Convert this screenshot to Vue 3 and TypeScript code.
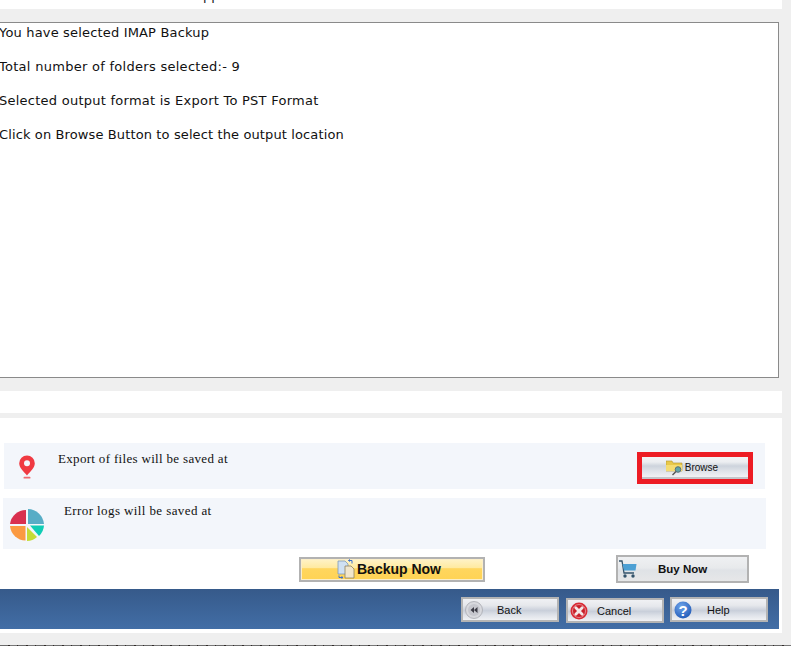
<script setup lang="ts">
const lines: string[] = [
  'You have selected IMAP Backup',
  'Total number of folders selected:- 9',
  'Selected output format is Export To PST Format',
  'Click on Browse Button to select the output location',
]
</script>

<template>
  <div class="page">
    <div class="top"><span class="tail">pp</span></div>
    <div class="box-wrap">
      <div class="box">
        <p v-for="l in lines" :key="l" class="line">{{ l }}</p>
      </div>
    </div>
    <div class="strip"></div>
    <div class="panel">
      <div class="row row-a">
        <svg class="pin" width="16" height="24" viewBox="0 0 16 24">
          <path d="M8 .5A7.800 7.800 0 0 0 .2 8.300C.2 13 5 17 8 20.500c3-3.500 7.800-7.500 7.800-12.200A7.800 7.800 0 0 0 8 .5z" fill="#f03a42"/>
          <circle cx="8" cy="8.300" r="3" fill="#f3f6fb"/>
          <rect x="4.500" y="21.800" width="7" height="1.800" rx=".9" fill="#ee6a70"/>
        </svg>
        <span class="label label-a">Export of files will be saved at</span>
        <div class="red">
          <button class="btn browse">
            <svg width="17" height="16" viewBox="0 0 17 16">
              <path d="M0 1h6l1 2h9v8H0z" fill="#e8c84a" stroke="#b4962a" stroke-width=".6"/>
              <path d="M0 5h16v6H0z" fill="#f4dc72"/>
              <circle cx="12" cy="9.500" r="2.800" fill="#5fa4a8" stroke="#56707a"/>
              <path d="M10 11.500 6.500 15" stroke="#555" stroke-width="1.400"/>
            </svg>
            <span>Browse</span>
          </button>
        </div>
      </div>
      <div class="row row-b">
        <svg class="chart" width="36" height="34" viewBox="0 0 36 34">
          <path d="M17 16V2a16 16 0 0 0-16 14z" fill="#d9304f"/>
          <path d="M19 1a16.500 16.500 0 0 1 16 15H19z" fill="#57adc6"/>
          <path d="M35 17.500a16 16 0 0 1-5 10.500l-9-10.500z" fill="#0fcdb5"/>
          <path d="M28 29a16 16 0 0 1-10 4V19z" fill="#c4dc36"/>
          <path d="M16.500 32.500A16 16 0 0 1 1 18h15.500z" fill="#fb9a41"/>
        </svg>
        <span class="label label-b">Error logs will be saved at</span>
      </div>
      <div class="cta">
        <button class="backup">
          <svg width="20" height="20" viewBox="0 0 20 20">
            <path d="M1 2h7l3 3v10H1z" fill="#cfe0f2" stroke="#7f9ab8" stroke-width=".8"/>
            <path d="M8 7h6l3 3v9H8z" fill="#f1e6cc" stroke="#8d8060" stroke-width=".8"/>
            <path d="M11.500 1.500h3.500v3M11.500 1.500l1.500-1M11.500 1.500l1.500 1" fill="none" stroke="#3a6fd0"/>
            <path d="M2 16.500v2h4M6 18.500l-1.500-1M6 18.500l-1.500 1" fill="none" stroke="#3a6fd0"/>
          </svg>
          <span>Backup Now</span>
        </button>
        <button class="buy">
          <svg width="18" height="20" viewBox="0 0 18 20">
            <path d="M0 2h3l2 12h10" fill="none" stroke="#33536b" stroke-width="1.300"/>
            <path d="M3.500 5h14l-1 6.500H5z" fill="#4da0d4"/>
            <circle cx="6" cy="17" r="1.700" fill="#33536b"/>
            <circle cx="14" cy="17" r="1.700" fill="#33536b"/>
          </svg>
          <span>Buy Now</span>
        </button>
      </div>
      <div class="bar">
        <button class="btn nav nav-back">
          <svg width="18" height="18" viewBox="0 0 18 18">
            <circle cx="9" cy="9" r="8.500" fill="#d8d9de" stroke="#a8a9b0" stroke-width=".8"/>
            <circle cx="9" cy="9" r="6" fill="#c6c7ce"/>
            <path d="M9 6v6L5.500 9zM12.500 6v6L9 9z" fill="#3c3c46"/>
          </svg>
          <span>Back</span>
        </button>
        <button class="btn nav nav-cancel">
          <svg width="18" height="18" viewBox="0 0 18 18">
            <circle cx="9" cy="9" r="8.500" fill="#d92b35"/>
            <circle cx="9" cy="9" r="6.500" fill="#c8202a" stroke="#e8a0a4" stroke-width=".8"/>
            <path d="M5.800 5.800l6.400 6.400M12.200 5.800l-6.400 6.400" stroke="#f4e8e8" stroke-width="2.800" stroke-linecap="round"/>
          </svg>
          <span>Cancel</span>
        </button>
        <button class="btn nav nav-help">
          <svg width="18" height="18" viewBox="0 0 18 18">
            <defs>
              <radialGradient id="helpGloss" cx=".4" cy=".3" r=".8">
                <stop offset="0" stop-color="#6fa4ea"/>
                <stop offset="1" stop-color="#1b55b4"/>
              </radialGradient>
            </defs>
            <circle cx="9" cy="9" r="8.500" fill="url(#helpGloss)"/>
            <text x="9" y="14.500" text-anchor="middle" class="q">?</text>
          </svg>
          <span>Help</span>
        </button>
      </div>
      <div class="foot"></div>
    </div>
    <div class="bottom"></div>
  </div>
</template>

<style>
html, body { margin: 0; background: #efefef; overflow: hidden; }
</style>

<style scoped>
.page {
  width: 791px;
  height: 646px;
  background: #efefef;
  overflow: hidden;
  position: relative;
  font-family: "Liberation Sans", Arial, sans-serif;
}
.top {
  width: 782px;
  height: 9px;
  background: #fff;
  overflow: hidden;
  padding-left: 203px;
  box-sizing: border-box;
}
.tail {
  display: block;
  margin-top: -11px;
  font: 13px/13px "DejaVu Sans", sans-serif;
  color: #222;
}
.box-wrap { padding-top: 13px; height: 356px; }
.box {
  width: 778px;
  height: 354px;
  background: #fff;
  border: 1px solid #8a8a8a;
  border-left: 0;
}
.line {
  margin: 0 0 15px -1px;
  font: 13px/19px "DejaVu Sans", Verdana, sans-serif;
  letter-spacing: .17px;
  color: #111;
  white-space: pre;
}
.line:nth-child(2) { letter-spacing: .28px; }
.line:nth-child(3) { letter-spacing: .25px; }
.line:nth-child(4) { letter-spacing: .12px; }
.strip {
  width: 782px;
  height: 22px;
  margin-top: 13px;
  background: #fff;
  margin-bottom: 5px;
}
.panel {
  width: 782px;
  height: 215px;
  background: #fff;
  box-sizing: border-box;
  padding-top: 25px;
}
.row {
  background: #f3f6fb;
  display: flex;
  align-items: flex-start;
}
.row-a {
  margin-left: 4px;
  width: 761px;
  height: 46px;
}
.row-b {
  margin-left: 3px;
  margin-top: 9px;
  width: 763px;
  height: 51px;
}
.pin { margin: 12px 0 0 15px; flex: none; }
.chart { margin: 10px 0 0 6px; flex: none; }
.label {
  font: 13px/15px "Liberation Serif", "DejaVu Serif", serif;
  letter-spacing: .32px;
  color: #111;
  white-space: nowrap;
}
.label-a { margin: 8px 0 0 23px; }
.label-b { margin: 5px 0 0 19px; letter-spacing: .4px; }
.red {
  margin: 9px 12px 0 auto;
  width: 116px;
  height: 32px;
  box-sizing: border-box;
  border: 5px solid #ed1c24;
}
.btn {
  padding: 0;
  font: 10px/12px "Liberation Sans", Arial, sans-serif;
  color: #111;
  display: flex;
  align-items: center;
  background: linear-gradient(#f3f4f6 0%, #eceef1 25%, #cdd3dc 45%, #dfe3e9 70%, #f1f2f4 100%);
  border: 2px solid #b4b4b4;
  box-sizing: border-box;
}
.browse {
  width: 106px;
  height: 22px;
  border: 0;
  border-bottom: 2px solid #c4c6ca;
  justify-content: center;
  gap: 2px;
  padding: 1px 6px 0 0;
}
.cta {
  display: flex;
  align-items: flex-start;
  margin-top: 6px;
  height: 34px;
}
.backup {
  margin: 2px 0 0 299px;
  width: 186px;
  height: 25px;
  padding: 0 6px 1px 0;
  border: 2px solid #b2b2b2;
  box-shadow: inset 0 0 0 1px #fbeec8;
  background: linear-gradient(#fff3c8 0%, #ffeaa0 42%, #ffd65e 46%, #ffd354 100%);
  display: flex;
  align-items: center;
  justify-content: center;
  gap: 0;
  font: bold 14px/16px "Liberation Sans", Arial, sans-serif;
  color: #111;
  box-sizing: border-box;
}
.buy {
  margin-left: 131px;
  width: 133px;
  height: 28px;
  border: 2px solid #b2b2b2;
  background: linear-gradient(#eff0f2 0%, #e8eaec 45%, #dfe2e6 55%, #e6e7e8 100%);
  display: flex;
  align-items: center;
  padding: 0;
  font: bold 11.500px/14px "Liberation Sans", Arial, sans-serif;
  color: #111;
  box-sizing: border-box;
}
.buy svg { margin-left: 1px; flex: none; }
.buy span { margin-left: 21px; }
.bar {
  width: 779px;
  height: 40px;
  background: linear-gradient(#365a8a, #426ea6);
  display: flex;
  align-items: flex-start;
}
.nav {
  width: 98px;
  height: 25px;
  flex: none;
  font-size: 11px;
  background: linear-gradient(#f0f1f4 0%, #e6e8ec 30%, #c9cfda 55%, #dde1e8 75%, #f0f1f4 100%);
}
.nav svg { margin-left: 2px; flex: none; }
.nav span { margin-left: 14px; }
.nav-back { margin: 8px 0 0 461px; }
.nav-cancel { margin: 9px 0 0 7px; }
.nav-help { margin: 8px 0 0 6px; }
.nav-help span { margin-left: 15px; }
.nav-cancel span { margin-left: 9px; }
.q { font: bold 15px "Liberation Sans", Arial, sans-serif; fill: #fff; }
.foot { height: 4px; }
.bottom {
  position: absolute;
  left: 0;
  right: 0;
  bottom: 0;
  height: 1px;
  background: repeating-linear-gradient(90deg, #6a6a6a 0 8px, #2f2a28 8px 10px, #777 10px 17px, #2f2a28 17px 18px);
}
</style>
